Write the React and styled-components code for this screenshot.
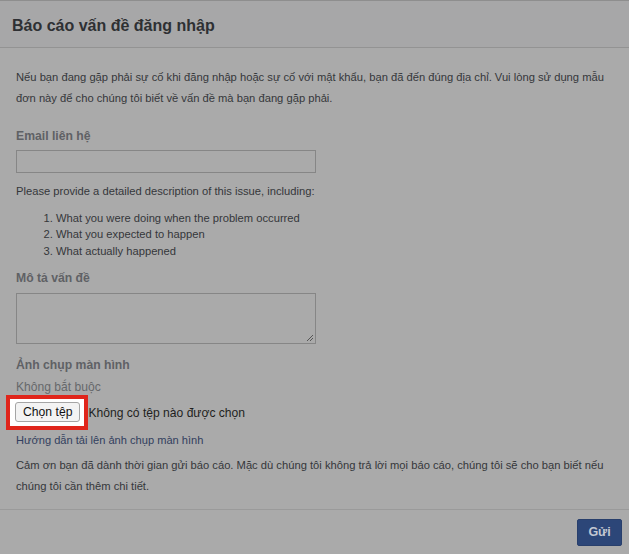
import React from 'react'
import styled, {createGlobalStyle} from 'styled-components'

const GlobalStyle = createGlobalStyle`
    html, body {
        margin: 0;
        padding: 0;
        background: #aaaaaa;
    }
    body {
        font-family: "Liberation Sans", Arial, Helvetica, sans-serif;
    }
`

const Dialog = styled.div`
    width: 629px;
    height: 554px;
    display: flex;
    flex-direction: column;
    background: #aaaaaa;
    border-top: 1px solid #8e8e8e;
    box-sizing: border-box;
`

const Header = styled.div`
    height: 47px;
    display: flex;
    align-items: center;
    padding: 3px 12px 0;
    background: #a7a7a8;
    border-bottom: 1px solid #939393;
    box-sizing: border-box;
`

const Title = styled.h1`
    margin: 0;
    font-size: 16px;
    font-weight: bold;
    color: #2e3033;
`

const Body = styled.div`
    flex: 1;
    padding: 19px 16px 0;
    color: #35373a;
    font-size: 11.2px;
`

const Text = styled.p`
    margin: 0;
    line-height: 20.5px;
    margin-bottom: ${p => p.mb || 0}px;
`

const Label = styled.div`
    font-size: 12.2px;
    font-weight: bold;
    color: #5f6165;
    line-height: 16px;
    margin-bottom: ${p => p.mb || 0}px;
`

const Hint = styled.div`
    font-size: 12.1px;
    color: #66686b;
    line-height: 16px;
`

const Input = styled.div`
    width: 300px;
    height: 23px;
    border: 1px solid #868686;
    box-sizing: border-box;
    margin-bottom: 8px;
`

const TextArea = styled.div`
    position: relative;
    width: 300px;
    height: 51px;
    border: 1px solid #868686;
    box-sizing: border-box;
    margin-bottom: 13px;
`

const Grip = styled.svg`
    position: absolute;
    right: 1px;
    bottom: 1px;
`

const List = styled.ol`
    margin: 8px 0 11px;
    padding-left: 40px;
    line-height: 16.5px;
`

const FileRow = styled.div`
    display: flex;
    align-items: center;
    margin-left: -10px;
    margin-bottom: 2px;
`

const Highlight = styled.div`
    border: 4px solid #e0251b;
    padding: 3px 4px 4px 5px;
    display: flex;
    align-items: center;
    background: #ffffff;
`

const FileButton = styled.button`
    font-family: "Liberation Sans", Arial, sans-serif;
    font-size: 12.2px;
    color: #111;
    background: #f3f3f3;
    border: 1px solid #a5a5a5;
    border-radius: 3px;
    height: 20px;
    padding: 0 7px;
    line-height: 18px;
`

const FileText = styled.span`
    font-size: 12.1px;
    color: #1e1f21;
`

const Link = styled.a`
    display: block;
    font-size: 11.1px;
    color: #323f5e;
    line-height: 16px;
    margin-bottom: 7px;
    text-decoration: none;
`

const Footer = styled.div`
    height: 44px;
    display: flex;
    justify-content: flex-end;
    align-items: center;
    padding: 0 7px;
    border-top: 1px solid #9a9a9a;
`

const SendButton = styled.button`
    font-family: "Liberation Sans", Arial, sans-serif;
    font-size: 12.5px;
    font-weight: bold;
    color: #c3c8d2;
    background: #2c4678;
    border: 1px solid #283f6c;
    border-radius: 2px;
    width: 45px;
    height: 27px;
`

const App = () => {
    return (
    <>
        <GlobalStyle/>
        <Dialog>
            <Header>
                <Title>Báo cáo vấn đề đăng nhập</Title>
            </Header>
            <Body>
                <Text mb={20}>
                    Nếu bạn đang gặp phải sự cố khi đăng nhập hoặc sự cố với mật khẩu, bạn đã đến đúng địa chỉ. Vui lòng sử dụng mẫu đơn này để cho chúng tôi biết về vấn đề mà bạn đang gặp phải.
                </Text>
                <Label mb={6}>Email liên hệ</Label>
                <Input/>
                <Text>Please provide a detailed description of this issue, including:</Text>
                <List>
                    <li>What you were doing when the problem occurred</li>
                    <li>What you expected to happen</li>
                    <li>What actually happened</li>
                </List>
                <Label mb={7}>Mô tả vấn đề</Label>
                <TextArea>
                    <Grip width="9" height="9" viewBox="0 0 9 9">
                        <path d="M8 2 L2 8 M8 5 L5 8" stroke="#555" strokeWidth="1"/>
                    </Grip>
                </TextArea>
                <Label mb={6}>Ảnh chụp màn hình</Label>
                <Hint>Không bắt buộc</Hint>
                <FileRow>
                    <Highlight>
                        <FileButton>Chọn tệp</FileButton>
                    </Highlight>
                    <FileText>Không có tệp nào được chọn</FileText>
                </FileRow>
                <Link>Hướng dẫn tải lên ảnh chụp màn hình</Link>
                <Text>
                    Cảm ơn bạn đã dành thời gian gửi báo cáo. Mặc dù chúng tôi không trả lời mọi báo cáo, chúng tôi sẽ cho bạn biết nếu chúng tôi cần thêm chi tiết.
                </Text>
            </Body>
            <Footer>
                <SendButton>Gửi</SendButton>
            </Footer>
        </Dialog>
    </>
    )
}

export default App
